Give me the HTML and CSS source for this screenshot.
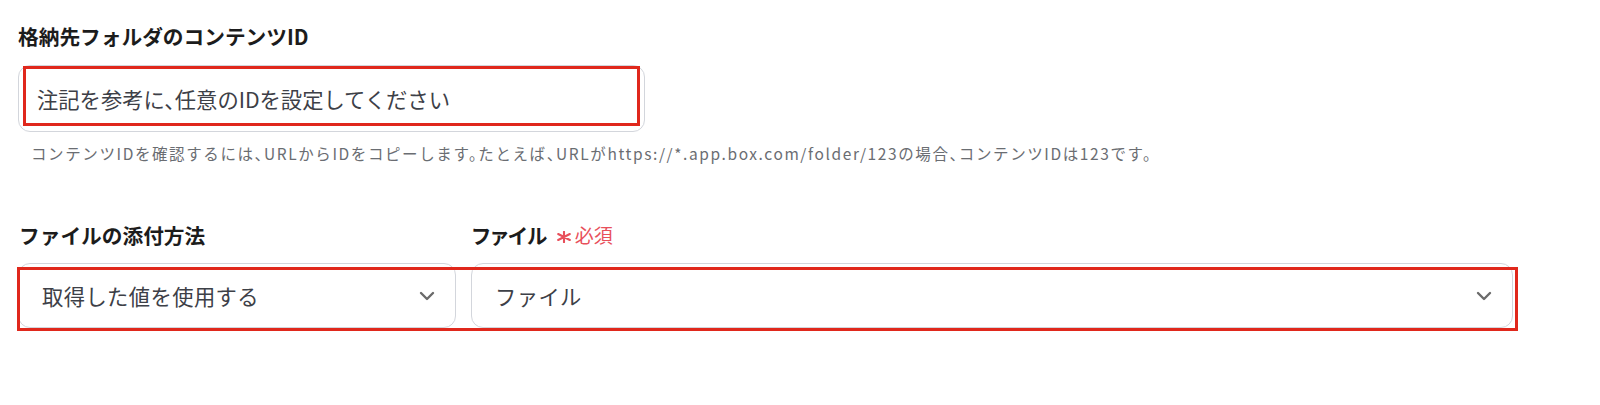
FILE: index.html
```html
<!DOCTYPE html>
<html lang="ja">
<head>
<meta charset="utf-8">
<title>Box設定</title>
<link rel="stylesheet" href="styles.css">
</head>
<body>
<div class="form">
  <section class="field">
    <div class="label">格納先フォルダのコンテンツID</div>
    <div class="input-wrap">
      <div class="input">注記を参考に、任意のIDを設定してください</div>
      <div class="highlight hl-input"></div>
    </div>
    <p class="help">コンテンツIDを確認するには、URLからIDをコピーします。たとえば、URLがhttps://*.app.box.com/folder/123の場合、コンテンツIDは123です。</p>
  </section>
  <div class="row">
    <div class="field col-method">
      <div class="label">ファイルの添付方法</div>
      <div class="select">
        <span class="select-text">取得した値を使用する</span>
        <svg class="chev" width="16" height="10" viewBox="0 0 16 10"><path d="M2 2l6 6 6-6" fill="none" stroke="#6b6b6b" stroke-width="2.4" stroke-linecap="round" stroke-linejoin="round"/></svg>
      </div>
    </div>
    <div class="field col-file">
      <div class="label"><span class="label-kana">ファイル</span><span class="req"><svg class="ast" width="14" height="12" viewBox="0 0 14 12"><path d="M7 0.8v10.4M1.2 3l11.6 6M1.2 9l11.6-6" fill="none" stroke="#e8505b" stroke-width="2.1" stroke-linecap="round"/></svg>必須</span></div>
      <div class="select">
        <span class="select-text">ファイル</span>
        <svg class="chev" width="16" height="10" viewBox="0 0 16 10"><path d="M2 2l6 6 6-6" fill="none" stroke="#6b6b6b" stroke-width="2.4" stroke-linecap="round" stroke-linejoin="round"/></svg>
      </div>
    </div>
    <div class="highlight hl-row"></div>
  </div>
</div>
</body>
</html>
```

FILE: styles.css
```css
* { box-sizing: border-box; }
html, body { margin: 0; padding: 0; background: #ffffff; }
body {
  font-family: "Noto Sans CJK JP", "Noto Sans", sans-serif;
  color: #1a1a1a;
}
.form {
  padding: 22px 0 70px 18px;
  width: 1520px;
}
.label {
  font-size: 20.7px;
  line-height: 28px;
  font-weight: 700;
  color: #1c1c1c;
  white-space: nowrap;
  height: 28px;
  display: flex;
  align-items: center;
}
.label-kana { font-feature-settings: "palt"; letter-spacing: 0.5px; }
.input-wrap {
  position: relative;
  width: 627px;
  margin-top: 15px;
}
.input {
  height: 67px;
  border: 1px solid #d3d6dc;
  border-radius: 12px;
  padding: 0 0 0 18px;
  display: flex;
  align-items: center;
  font-size: 21.3px;
  font-feature-settings: "halt";
  color: #3d4047;
  white-space: nowrap;
}
.help {
  margin: 10px 0 0 13px;
  font-size: 15.5px;
  letter-spacing: 1.6px;
  font-feature-settings: "halt";
  line-height: 22px;
  color: #6a6d72;
  white-space: nowrap;
}
.row {
  position: relative;
  display: flex;
  gap: 15px;
  margin-top: 57px;
  width: 1495px;
}
.col-method { width: 438px; flex: none; }
.col-file { flex: 1; }
.row .label { padding-left: 1px; }
.req {
  display: inline-flex;
  align-items: center;
  color: #e8505b;
  font-weight: 400;
  font-size: 19px;
  margin-left: 9px;
}
.ast { margin: 4px 4px 0 0; }
.select {
  margin-top: 14px;
  height: 65px;
  border: 1px solid #d3d6dc;
  border-radius: 12px;
  display: flex;
  align-items: center;
  justify-content: space-between;
  padding: 0 20px 0 23px;
}
.select-text {
  font-size: 21.3px;
  letter-spacing: 0.4px;
  color: #3d4047;
}
.chev { flex: none; }
.highlight {
  position: absolute;
  border: 3px solid #e0281c;
  pointer-events: none;
}
.hl-input { left: 5px; top: 1px; width: 617px; height: 60px; }
.hl-row { left: -1px; top: 46px; width: 1501px; height: 64px; }
```
